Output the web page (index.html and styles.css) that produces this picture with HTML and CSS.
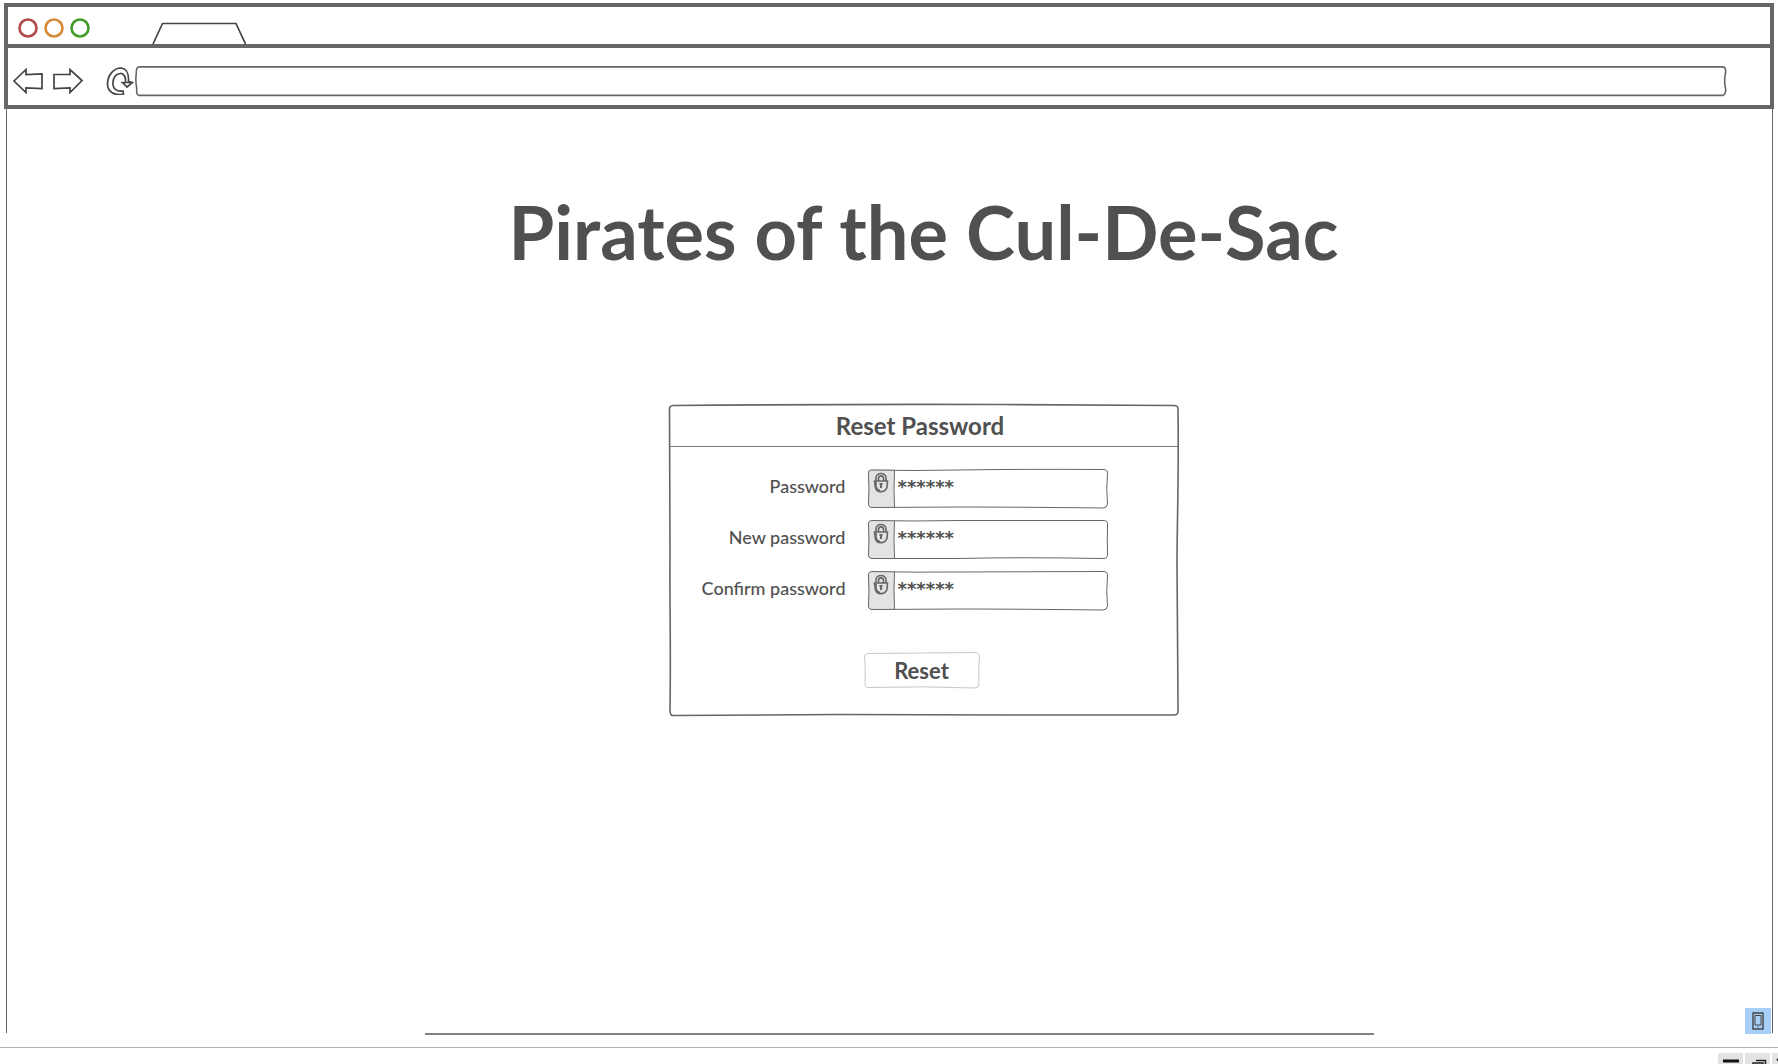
FILE: index.html
```html
<!DOCTYPE html>
<html lang="en">
<head>
<meta charset="utf-8">
<title>Pirates of the Cul-De-Sac</title>
<link rel="stylesheet" href="styles.css">
</head>
<body>
<header class="chrome">
  <div class="tabs">
    <svg class="lights" width="72" height="24" viewBox="0 0 72 24" fill="none" stroke-width="2.6">
      <circle cx="10" cy="12" r="8.5" stroke="#b04a47"/>
      <circle cx="36" cy="12" r="8.5" stroke="#d58a35"/>
      <circle cx="62" cy="12" r="8.5" stroke="#3f9c27"/>
    </svg>
    <svg class="tab" width="94" height="22" viewBox="0 0 94 22" fill="none" stroke="#444" stroke-width="1.7"><path d="M1 22 10.500 1.500H84L93.500 22"/></svg>
  </div>
  <div class="toolbar">
    <button class="nav" type="button" aria-label="Back"><svg width="30" height="26" viewBox="0 0 30 26"><path d="M1 13 13 1.500V6.500L29 6V20.500L13 20V24.500Z"/></svg></button>
    <button class="nav" type="button" aria-label="Forward"><svg width="30" height="26" viewBox="0 0 30 26"><path d="M1 6.500H17V1.500L29 12.500 17 24.500V20L1 20.500Z"/></svg></button>
    <button class="nav reload" type="button" aria-label="Reload"><svg width="28" height="28" viewBox="0 0 28 28"><path d="M17.500 27C9 29 1.500 25 1.500 17 1.500 8 8 1 15 1 20.500 1.500 23 7 22.500 14.500L26.500 15.500 21 20 16.500 15.500H19.500C20 10 18 6 14 6.500 9 7 6.500 12 7 18 7.500 22 11 24.500 17 24Z M17 15.500H26"/></svg></button>
    <div class="address sketch">
      <svg class="outline" viewBox="0 0 100 100" preserveAspectRatio="none"><path d="M.2 3H99.800Q100 5 99.980 20Q99.850 50 99.980 76Q100 95 99.800 98H.2Q0 95 .05 75Q-.05 50 .02 24Q0 3 .2 3"/></svg>
      <input type="text" aria-label="Address">
    </div>
  </div>
</header>
<main class="page">
  <h1>Pirates of the Cul-De-Sac</h1>
  <form class="dialog sketch">
    <svg class="outline frame" viewBox="0 0 509 310" preserveAspectRatio="none"><path d="M4 1.500Q170 0 330 .5L503 1.500Q508 1 508 5C509 70 507 120 507 160 507 220 508 260 508 305Q508 309 504 309L340 309 170 308.500 5 309.500Q1 310 1 305C2 240 .5 190 1 150L.5 6Q0 2 4 1.500Z"/></svg>
    <h2>Reset Password</h2>
    <div class="fields">
      <label for="current">Password</label>
      <div class="field sketch">
        <span class="lock"><svg width="16" height="21" viewBox="0 0 16 21"><path d="M3 9V6C3 0 13 0 13 6V9M5.500 9V6.500C5.500 3 10.500 3 10.500 6.500V9M1.500 9H14.500L14 15C12.500 21 4 21 2.500 16ZM3 10V15Q4 18 7 18.500"/><path d="M8 11.500V16M6.500 12H9.500" stroke-width="2"/></svg></span>
        <input id="current" type="text" value="******">
        <svg class="outline" viewBox="0 0 240 39" preserveAspectRatio="none"><path d="M4 1Q45 2 90 1 150 0 236 .5 240 1 239.500 5 238 20 239.500 35 239 39 235 39 150 38 90 38L4 38.500Q0 38 .5 34 1.500 20 .5 5 0 1 4 1M26.500 1Q25.500 19 26.500 38"/></svg>
      </div>
      <label for="new">New password</label>
      <div class="field sketch">
        <span class="lock"><svg width="16" height="21" viewBox="0 0 16 21"><path d="M3 9V6C3 0 13 0 13 6V9M5.500 9V6.500C5.500 3 10.500 3 10.500 6.500V9M1.500 9H14.500L14 15C12.500 21 4 21 2.500 16ZM3 10V15Q4 18 7 18.500"/><path d="M8 11.500V16M6.500 12H9.500" stroke-width="2"/></svg></span>
        <input id="new" type="text" value="******">
        <svg class="outline" viewBox="0 0 240 39" preserveAspectRatio="none"><path d="M4 .5Q45 1.500 90 .5L236 .5Q240 1 239.500 5 239 20 239.500 35 239 39 235 38.500 150 37 90 38.500L4 38.500Q0 38 .5 34 1.500 20 .5 5 0 1 4 .5M26.500 1Q25.500 19 26.500 38"/></svg>
      </div>
      <label for="confirm">Confirm password</label>
      <div class="field sketch">
        <span class="lock"><svg width="16" height="21" viewBox="0 0 16 21"><path d="M3 9V6C3 0 13 0 13 6V9M5.500 9V6.500C5.500 3 10.500 3 10.500 6.500V9M1.500 9H14.500L14 15C12.500 21 4 21 2.500 16ZM3 10V15Q4 18 7 18.500"/><path d="M8 11.500V16M6.500 12H9.500" stroke-width="2"/></svg></span>
        <input id="confirm" type="text" value="******">
        <svg class="outline" viewBox="0 0 240 39" preserveAspectRatio="none"><path d="M4 .5Q45 1.500 90 1L236 .5Q240 1 239.500 5 238 20 239.500 35 239 39 235 39 150 38 90 38L4 38.500Q0 38 .5 34 1.500 20 .5 5 0 1 4 .5M26.500 1Q25.500 19 26.500 38"/></svg>
      </div>
    </div>
    <button class="reset sketch" type="submit">
      <svg class="outline" viewBox="0 0 116 36" preserveAspectRatio="none"><path d="M4 1.500Q60 1 111 .5 116 1 115.500 5 114 20 115 32 115 36 111 36 60 34 5 35.500 1 36 1 32 1.500 15 .5 5 .5 2 4 1.500Z"/></svg>
      Reset
    </button>
  </form>
  <button class="tool device" type="button" aria-label="Phone view"><svg width="12" height="18" viewBox="0 0 12 18" fill="none" stroke="#444"><path d="M1 1H11V17H1Z" stroke-width="1.400"/><path d="M3 3.500H9V13H3Z"/><path d="M5.500 15H6.500"/></svg></button>
  <span class="edge"></span>
</main>
<div class="rule"></div>
<footer class="dock">
  <button class="tool" type="button" aria-label="Minimise"><svg width="26" height="26" viewBox="0 0 26 26"><path d="M5 6.500H21V9.500H5Z" fill="#111"/></svg></button>
  <button class="tool" type="button" aria-label="Restore"><svg width="26" height="26" viewBox="0 0 26 26" fill="none" stroke="#222" stroke-width="1.500"><path d="M11 7.500H20.500V18M8 10H18V20H8Z"/></svg></button>
  <button class="tool" type="button" aria-label="Close"><svg width="26" height="26" viewBox="0 0 26 26" stroke="#222" stroke-width="2"><path d="M5 6 20 21M20 6 5 21"/></svg></button>
</footer>
</body>
</html>
```
FILE: styles.css
```css
* {
  box-sizing: border-box;
}

body {
  margin: 0;
  height: 100vh;
  display: flex;
  flex-direction: column;
  overflow: hidden;
  background: #fff;
  color: #505050;
  font-family: Lato, "Liberation Sans", sans-serif;
}

button,
input {
  font: inherit;
  color: inherit;
  padding: 0;
  border: 0;
  background: none;
}

svg {
  display: block;
  flex: none;
}

.sketch {
  position: relative;
}

.outline {
  position: absolute;
  inset: 0;
  width: 100%;
  height: 100%;
  overflow: visible;
  fill: none;
  stroke: #666;
  pointer-events: none;
}

.outline path {
  vector-effect: non-scaling-stroke;
}

.chrome {
  flex: none;
  margin: 3px 4px 0 4px;
  border: 4px solid #666;
}

.tabs {
  display: flex;
  align-items: flex-end;
  gap: 62px;
  height: 41px;
  padding-left: 10px;
  border-bottom: 4px solid #666;
}

.lights {
  margin-bottom: 4px;
}

.toolbar {
  display: flex;
  align-items: center;
  gap: 10px;
  height: 57px;
  padding: 8px 44px 0 5px;
}

.nav svg {
  fill: none;
  stroke: #444;
  stroke-width: 1.7;
}

.reload {
  margin-left: 13px;
}

.address {
  flex: 1;
  height: 30px;
  margin-left: -8px;
}

.address .outline {
  stroke-width: 1.6;
}

.address input {
  width: 100%;
  height: 100%;
  padding: 0 8px;
}

.page {
  position: relative;
  flex: 1;
  display: flex;
  flex-direction: column;
  align-items: center;
  margin: 0 5px 0 6px;
  padding: 67px 0 0 68px;
  border: solid #666;
  border-width: 0 1px;
}

h1 {
  margin: 0 0 116px;
  font-size: 74px;
  line-height: 112px;
  font-weight: 700;
}

.dialog {
  width: 510px;
  padding-bottom: 28px;
}

.frame {
  stroke-width: 1.6;
}

h2 {
  margin: 0;
  padding: 2px 7px 0 0;
  border-bottom: 1px solid #777;
  font-size: 24px;
  line-height: 40px;
  font-weight: 700;
  text-align: center;
}

.fields {
  display: grid;
  grid-template-columns: 1fr 240px;
  gap: 12px 22px;
  align-items: center;
  padding: 22px 71px 0 0;
}

.fields label {
  padding-bottom: 6px;
  font-size: 18px;
  line-height: 24px;
  font-weight: 500;
  text-align: right;
}

.field {
  display: flex;
  height: 39px;
}

.lock {
  width: 26px;
  padding: 3px 5px;
  border-radius: 4px 0 0 4px;
  background: #e3e3e3;
}

.lock svg {
  fill: none;
  stroke: #666;
  stroke-width: 1.6;
}

.field input {
  flex: 1;
  min-width: 0;
  padding: 0 4px 5px;
  font: bold 18px "DejaVu Sans", sans-serif;
}

.reset {
  display: block;
  width: 116px;
  height: 36px;
  margin: 42px auto 0 195px;
  font-size: 22px;
  font-weight: 700;
}

.reset .outline {
  stroke: #c8c8c8;
}

.tool {
  flex: none;
  width: 25px;
  height: 26px;
  background: #e3e3e3;
}

.device {
  position: absolute;
  right: 1px;
  bottom: -1px;
  width: 26px;
  background: #a6d0f8;
}

.device svg {
  margin: auto;
}

.edge {
  position: absolute;
  left: 418px;
  right: 398px;
  bottom: -2px;
  height: 2px;
  background: #808080;
}

.rule {
  flex: none;
  margin-top: 14px;
  height: 1px;
  background: #b0b0b0;
}

.dock {
  flex: none;
  display: flex;
  justify-content: flex-end;
  gap: 2px;
  height: 16px;
  padding-top: 5px;
  margin-right: -19px;
}
```
